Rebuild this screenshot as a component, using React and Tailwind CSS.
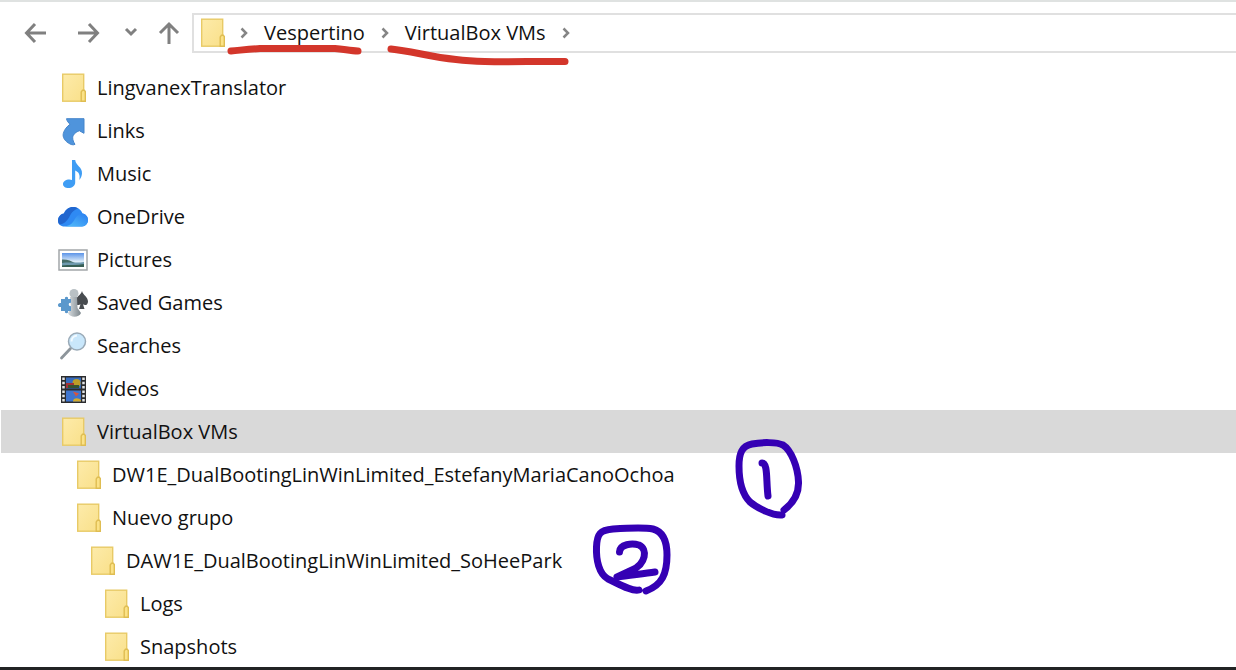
import React, { useState } from 'react';

// Carpetas del árbol, con su nivel de profundidad
const items = [
    { name: 'LingvanexTranslator', icon: 'folder', indent: 'pl-14' },
    { name: 'Links', icon: 'links', indent: 'pl-14' },
    { name: 'Music', icon: 'music', indent: 'pl-14' },
    { name: 'OneDrive', icon: 'cloud', indent: 'pl-14' },
    { name: 'Pictures', icon: 'pictures', indent: 'pl-14' },
    { name: 'Saved Games', icon: 'games', indent: 'pl-14' },
    { name: 'Searches', icon: 'search', indent: 'pl-14' },
    { name: 'Videos', icon: 'videos', indent: 'pl-14' },
    { name: 'VirtualBox VMs', icon: 'folder', indent: 'pl-14' },
    { name: 'DW1E_DualBootingLinWinLimited_EstefanyMariaCanoOchoa', icon: 'folder', indent: 'pl-[71px]' },
    { name: 'Nuevo grupo', icon: 'folder', indent: 'pl-[71px]' },
    { name: 'DAW1E_DualBootingLinWinLimited_SoHeePark', icon: 'folder', indent: 'pl-[85px]' },
    { name: 'Logs', icon: 'folder', indent: 'pl-[99px]' },
    { name: 'Snapshots', icon: 'folder', indent: 'pl-[99px]' },
];

const drawings = {
    folder: (
        <>
            <rect x="5.7" y="2.200" width="21" height="27" fill="url(#folderFill)" stroke="#e8ca66" strokeWidth="1.4" />
            <path d="M24.200 29.200V20l1.300-1.800h1.800l1 1.300v9.700z" fill="#fbe287" stroke="#dfbd52" strokeWidth="1.4" />
        </>
    ),
    links: (
        <path
            d="M9.500 3.700H27V18.300L22.300 15.700C18 17.500 15.700 20 15.700 22.700C15.700 25 16.500 27 18 29.300C16 30.500 13.500 29.500 11 27.700C7.500 25.500 5.500 22 6.300 18.500C7.300 14.500 10 11.500 13 9.300C11.500 7.500 10 6.500 9.500 3.700z"
            fill="#4f94dc"
            stroke="#4585cb"
        />
    ),
    music: (
        <path
            d="M15 2H18.200C18.700 7.500 25.500 9 25 15.500C24.800 17.900 24 20 22.300 22C23.300 17 22 14 18.200 12.500V24.500C18.200 28 15 30 11.500 30C8.300 30 6 28.500 6 26C6 23.500 9 21.500 12.300 21.500C13.300 21.500 14.300 21.700 15 22z"
            fill="#3f9df4"
        />
    ),
    cloud: (
        <>
            <path d="M7.500 25.500C3.500 25.500 1 23 1 19.500C1 16 3.500 13 7 12.500C8.500 8.500 12 6 16 6C20.500 6 24 8.500 25.500 12.500C28.500 13 31 15.500 31 19C31 22.500 28.500 25.500 25 25.500z" fill="#2f8af3" />
            <path d="M7 12.500C8.500 8.500 12 6 16 6C17.800 6 19.500 6.500 21 7.300C15.500 9.500 14 13 12 16.500C10 20 7 23 2.500 23.500C1.500 22.500 1 21 1 19.500C1 16 3.500 13 7 12.500z" fill="#2166cf" />
            <path d="M7.500 25.500C14.500 24.500 16 21 18.500 17C20.500 14 23 12.500 25.500 12.500C28.500 13 31 15.500 31 19C31 22.500 28.500 25.500 25 25.500z" fill="url(#cloudFill)" />
        </>
    ),
    pictures: (
        <>
            <rect x="2" y="6" width="28" height="20" fill="#fff" stroke="#a3a6a9" strokeWidth="1.500" />
            <rect x="5" y="9" width="22" height="14" fill="url(#skyFill)" />
            <path d="M5 15.500c5-.5 9 1.500 13 3.500H5z" fill="#466c67" />
            <path d="M5 19c8-1.500 14 .5 22-1v5H5z" fill="#6f9ab0" />
            <path d="M5 21.500c7-1 15 0 22-1.500v3H5z" fill="#385f55" />
        </>
    ),
    games: (
        <>
            <path d="M25 4C26 8 31 10 31 14.500C31 18 28 19 26 17.300L27.500 22H22L23.500 17.300C21.500 19 18.500 18 18.500 14.500C18.500 10 24 8 25 4z" fill="#484c50" />
            <circle cx="17" cy="6.500" r="4.500" fill="#b9c1c5" />
            <path d="M13 10H20L20.500 21L24 26C22 31 13 31 11 26L14 21z" fill="url(#pawnFill)" />
            <path d="M4 12H8C7 9 12 9 11 12H14V16C11 15 11 20 14 19V24H11C12 27 7 27 8 24H4V20C0 21 0 15 4 16z" fill="#5b98cc" />
        </>
    ),
    search: (
        <>
            <path d="M4.500 28L13.500 18.500" stroke="#8d959b" strokeWidth="2.800" strokeLinecap="round" />
            <circle cx="20" cy="11.500" r="8.500" fill="#c9e7fb" stroke="#9aaab7" strokeWidth="1.500" />
            <path d="M14.500 11.500a6 6 0 0 1 5.500-6" stroke="#f2faff" strokeWidth="2" fill="none" />
        </>
    ),
    videos: (
        <>
            <rect x="4" y="3" width="25" height="27" fill="#2b2c2e" />
            <path d="M6.500 4.500V29M26.500 4.500V29" stroke="#e2e4e6" strokeWidth="2.500" strokeDasharray="2.500 1.800" />
            <rect x="9" y="4.500" width="15" height="11" fill="#366bbd" />
            <rect x="9" y="17.500" width="15" height="11" fill="#3f75cf" />
            <circle cx="19.500" cy="10" r="4" fill="#bd9d27" />
            <path d="M9 10h8v5H9z" fill="#a23136" />
            <path d="M11 12h11v3H11z" fill="#35532f" />
            <path d="M16 18.500l6 2-3 3z" fill="#d9553d" />
            <path d="M16 28.500c0-4 6-4 8-1v1z" fill="#d3a92c" />
        </>
    ),
};

function ItemIcon({ type }) {
    return (
        <svg className="size-8 shrink-0" viewBox="0 0 32 32" fill="none" aria-hidden="true">
            {drawings[type]}
        </svg>
    );
}

// Degradados compartidos por los iconos
function Gradients() {
    return (
        <svg className="absolute size-0" aria-hidden="true">
            <defs>
                <linearGradient id="folderFill" x1="0" y1="0" x2="1" y2="1">
                    <stop offset="0" stopColor="#fdebaa" />
                    <stop offset="1" stopColor="#f9e08a" />
                </linearGradient>
                <linearGradient id="cloudFill" x1="0" y1="1" x2="1" y2="0">
                    <stop offset="0" stopColor="#55c0fa" />
                    <stop offset="1" stopColor="#297df0" />
                </linearGradient>
                <linearGradient id="skyFill" x1="0" y1="0" x2="0" y2="1">
                    <stop offset="0" stopColor="#5c94e8" />
                    <stop offset="0.6" stopColor="#dcebf8" />
                </linearGradient>
                <linearGradient id="pawnFill">
                    <stop offset="0" stopColor="#d7dcdf" />
                    <stop offset="1" stopColor="#7d878d" />
                </linearGradient>
            </defs>
        </svg>
    );
}

function NavButton({ label, width, d }) {
    return (
        <button type="button" aria-label={label} className="shrink-0">
            <svg width={width} height="24" viewBox={`0 0 ${width} 24`} fill="none" stroke="#808080" strokeWidth="3">
                <path d={d} />
            </svg>
        </button>
    );
}

function Separator() {
    return (
        <svg className="shrink-0" width="8" height="12" viewBox="0 0 8 12" fill="none" stroke="#858585" strokeWidth="2.500" aria-hidden="true">
            <path d="M1.500 1.500L6 6L1.500 10.500" />
        </svg>
    );
}

// Trazos a mano sobre la ventana
function Marks() {
    return (
        <svg className="absolute top-0 left-0 pointer-events-none" width="820" height="620" fill="none" strokeLinecap="round" strokeLinejoin="round" aria-hidden="true">
            <g stroke="#d3362b" strokeWidth="7">
                <path d="M231 51C242 50 250 49 260 48.500H335C344 49 350 51 358 51" />
                <path d="M391 49C412 51 430 57 456 59.500C480 62.500 500 61.500 565 61.500" />
            </g>
            <g stroke="#3500b4" strokeWidth="7">
                <path d="M782 515C773 516 757 508 750 502C742 494 739 479 739 466C739 453 742 446 752 444C762 442 777 442 783 445C791 450 798 467 798.500 482C799 496 792 504 784 510" />
                <path d="M762 463C768 463 766 480 768 496" />
                <path d="M639 590C632 592 617 583 608 579C599 574 596 560 596.500 547C597 534 600 530 613 529C628 528 643 527 653 529C664 532 667 542 667 555C667 574 662 585 646 591" />
                <path d="M619.500 552C620 544 632 543 639 545C648 549 646 564 632 570L617 577C628 575 643 574 655 572" />
            </g>
        </svg>
    );
}

export default function App() {
    const [selected, setSelected] = useState('VirtualBox VMs');

    return (
        <div className="relative min-h-screen bg-white font-['Open_Sans','Noto_Sans',sans-serif] text-xl text-[#111]">
            <Gradients />
            <header className="flex items-center h-[66px] pb-0.5 pl-6 border-t-2 border-[#dfe2e1]">
                <nav aria-label="Historial" className="flex items-center">
                    <div className="flex items-center gap-8">
                        <NavButton label="Atrás" width={22} d="M22 12H3M11 3L2.500 12L11 21" />
                        <NavButton label="Adelante" width={22} d="M0 12H19M11 3L19.500 12L11 21" />
                    </div>
                    <div className="flex items-center gap-5 pl-6">
                        <NavButton label="Recientes" width={14} d="M2 8L7 13L12 8" />
                        <NavButton label="Subir" width={22} d="M11 23V3M2 12L11 3L20 12" />
                    </div>
                </nav>
                <div className="flex flex-1 items-center h-10 ml-3 pl-0.5 border-2 border-r-0 border-[#e0e0e0]">
                    <ItemIcon type="folder" />
                    <div className="flex items-center gap-4 pl-3">
                        <Separator />
                        <button type="button">Vespertino</button>
                        <Separator />
                        <button type="button">VirtualBox VMs</button>
                        <Separator />
                    </div>
                </div>
            </header>

            <ul>
                {items.map((item) => (
                    <li key={item.name} className="pl-px">
                        <button
                            type="button"
                            onClick={() => setSelected(item.name)}
                            className={`flex items-center gap-2 w-full h-[43px] text-left whitespace-nowrap ${item.indent} ${
                                selected === item.name ? 'bg-[#d9d9d9]' : ''
                            }`}
                        >
                            <ItemIcon type={item.icon} />
                            {item.name}
                        </button>
                    </li>
                ))}
            </ul>

            <footer className="relative h-[3px] -mt-px bg-[#222324]" />
            <Marks />
        </div>
    );
}
